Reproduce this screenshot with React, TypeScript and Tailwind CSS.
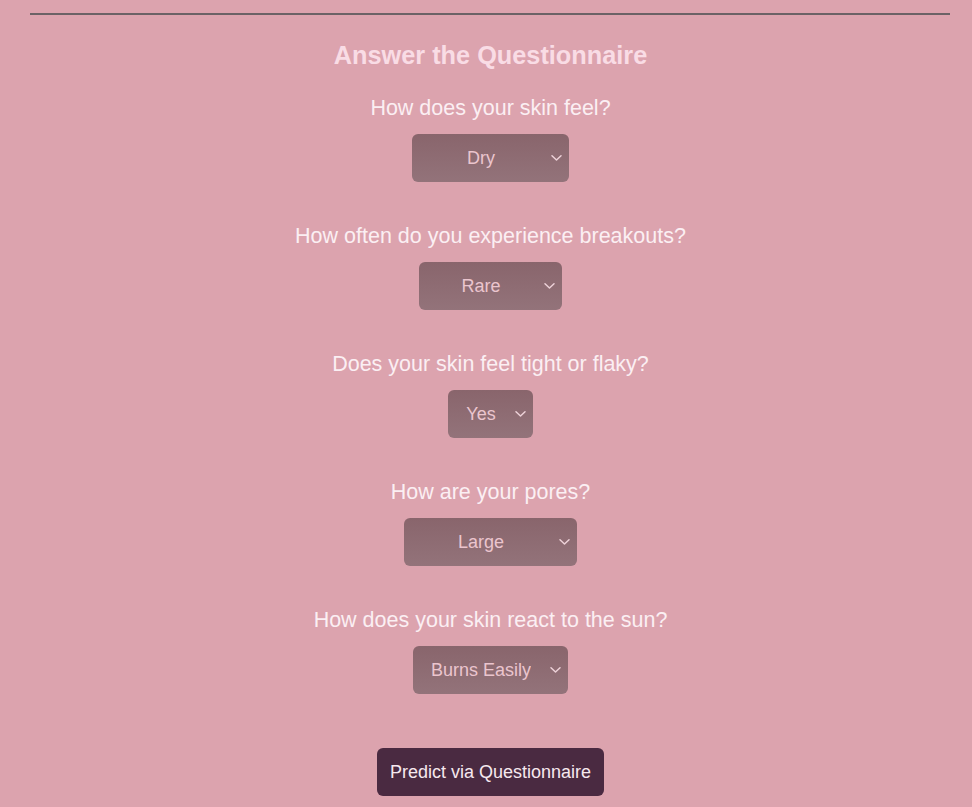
import React, { useState } from "react";

const questions = [
  { id: "feel", label: "How does your skin feel?", options: ["Dry", "Oily", "Normal", "Combination"], width: "w-[157px]" },
  { id: "breakouts", label: "How often do you experience breakouts?", options: ["Rare", "Often", "Sometimes"], width: "w-[143px]" },
  { id: "tight", label: "Does your skin feel tight or flaky?", options: ["Yes", "No"], width: "w-[85px]" },
  { id: "pores", label: "How are your pores?", options: ["Large", "Small", "Medium"], width: "w-[173px]" },
  { id: "sun", label: "How does your skin react to the sun?", options: ["Burns Easily", "Tans", "Both"], width: "w-[155px]" },
];

const Chevron = () => (
  <svg
    width="11"
    height="7"
    viewBox="0 0 11 7"
    fill="none"
    className="pointer-events-none absolute right-[7px] top-1/2 -translate-y-1/2"
  >
    <path d="M1 1.2L5.5 5.5L10 1.2" stroke="#ecd0d7" strokeWidth="1.5" strokeLinecap="round" strokeLinejoin="round" />
  </svg>
);

const App = () => {
  const [answers, setAnswers] = useState<Record<string, string>>(
    Object.fromEntries(questions.map((q) => [q.id, q.options[0]]))
  );

  return (
    <div
      className="min-h-screen bg-[#dca3ae] pt-[13px] pb-[11px]"
      style={{ fontFamily: '"Liberation Sans", Arial, sans-serif' }}
    >
      <div className="ml-[30px] w-[920px]">
        <hr className="border-0 border-t-2 border-[#6b6266]" />

        <h2 className="mt-[26px] pl-[1px] text-center text-[25.3px] leading-[29px] font-bold text-[#f9dce5]">
          Answer the Questionnaire
        </h2>

        <div className="flex flex-col items-center pl-[1px]">
          {questions.map((q, i) => (
            <div key={q.id} className={`flex flex-col items-center ${i === 0 ? "mt-[26px]" : "mt-[42px]"}`}>
              <label className="text-[21.5px] leading-[25px] text-[#fbeff3]">{q.label}</label>
              <div className={`relative mt-[13px] ${q.width}`}>
                <select
                  value={answers[q.id]}
                  onChange={(e) => setAnswers({ ...answers, [q.id]: e.target.value })}
                  className="h-[48px] w-full appearance-none rounded-[6px] bg-gradient-to-b from-[#89656c] to-[#93737a] pl-[18px] pr-[37px] text-center text-[18px] text-[#ebc5ce] outline-none"
                >
                  {q.options.map((o) => (
                    <option key={o} value={o}>
                      {o}
                    </option>
                  ))}
                </select>
                <Chevron />
              </div>
            </div>
          ))}

          <button className="mt-[54px] h-[48px] w-[227px] rounded-[6px] bg-[#4a2a41] text-[18px] text-[#f6e8ee]">
            Predict via Questionnaire
          </button>
        </div>
      </div>
    </div>
  );
};

export default App;
